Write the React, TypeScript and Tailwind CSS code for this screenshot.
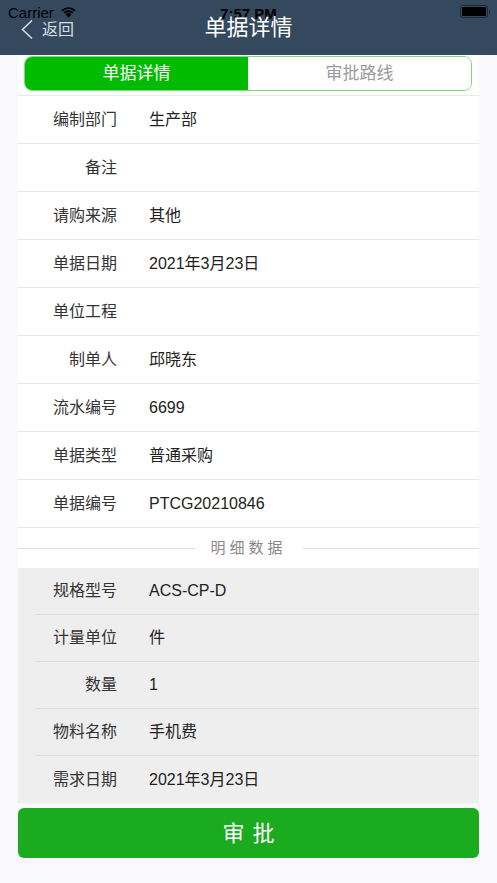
import React from "react";

const topRows: [string, string][] = [
  ["编制部门", "生产部"],
  ["备注", ""],
  ["请购来源", "其他"],
  ["单据日期", "2021年3月23日"],
  ["单位工程", ""],
  ["制单人", "邱晓东"],
  ["流水编号", "6699"],
  ["单据类型", "普通采购"],
  ["单据编号", "PTCG20210846"],
];

const detailRows: [string, string][] = [
  ["规格型号", "ACS-CP-D"],
  ["计量单位", "件"],
  ["数量", "1"],
  ["物料名称", "手机费"],
  ["需求日期", "2021年3月23日"],
];

export default function App() {
  return (
    <div
      className="w-[497px] h-[883px] bg-[#f9f8fd] flex flex-col overflow-hidden"
      style={{ fontFamily: '"Liberation Sans", "Noto Sans CJK SC", sans-serif' }}
    >
      {/* Nav bar */}
      <div className="relative h-[55px] bg-[#34495e] shrink-0">
        {/* status bar */}
        <div className="absolute left-0 top-[1px] w-full h-[22px] flex items-center px-[8px]">
          <span className="text-[15px] text-black leading-none">Carrier</span>
          <svg className="ml-[6px]" width="17" height="12" viewBox="0 0 17 12">
            <path d="M8.5 11.5 L5.6 8.4 A4.2 4.2 0 0 1 11.4 8.4 Z" fill="#000" />
            <path d="M3.6 6.3 A7 7 0 0 1 13.4 6.3 L12.1 7.6 A5.2 5.2 0 0 0 4.9 7.6 Z" fill="#000" />
            <path d="M1.4 4.1 A10.2 10.2 0 0 1 15.6 4.1 L14.3 5.4 A8.4 8.4 0 0 0 2.7 5.4 Z" fill="#000" />
          </svg>
          <span className="absolute left-1/2 -translate-x-1/2 top-[5px] text-[15px] font-semibold text-black leading-none">
            7:57 PM
          </span>
          <div className="absolute right-[7px] top-[4px] flex items-center">
            <div className="w-[28px] h-[13px] rounded-[3px] border border-[#1c2836] p-[1px]">
              <div className="w-full h-full bg-black rounded-[1px]" />
            </div>
            <div className="w-[1.5px] h-[4px] bg-[#1c2836] ml-[1px] rounded-r-sm" />
          </div>
        </div>
        {/* back */}
        <div className="absolute left-[21px] top-[20px] flex items-center">
          <svg width="12" height="19" viewBox="0 0 12 19">
            <path d="M11 0.5 L1.5 9.5 L11 18.5" stroke="#d8dde3" strokeWidth="1.5" fill="none" />
          </svg>
          <span className="ml-[9px] text-[16px] text-[#d8dde3] leading-none">返回</span>
        </div>
        <div className="absolute left-0 right-0 top-[14px] text-center text-[22px] text-white leading-[28px]">
          单据详情
        </div>
      </div>

      {/* Content */}
      <div className="mx-[18px] bg-white flex flex-col">
        <div className="px-[6px] pr-[7px] pt-[1px]">
          <div className="flex h-[35px] rounded-[8px] border border-[#7fd97f] overflow-hidden">
            <div className="flex-1 bg-[#00bb00] flex items-center justify-center text-white text-[17px]">
              单据详情
            </div>
            <div className="flex-1 bg-white flex items-center justify-center text-[#9a9a9a] text-[17px]">
              审批路线
            </div>
          </div>
        </div>
        <div className="mt-[4px] border-t border-[#e8e8e8]">
          {topRows.map(([k, v]) => (
            <div key={k} className="h-[48px] border-b border-[#e8e8e8] flex items-center">
              <div className="w-[99px] text-right text-[16px] text-[#333]">{k}</div>
              <div className="ml-[32px] text-[16px] text-[#222]">{v}</div>
            </div>
          ))}
        </div>
        <div className="h-[40px] flex items-center">
          <div className="flex-1 h-px bg-[#dedede]" />
          <div className="px-[16px] text-[15px] text-[#888] tracking-[4px]">明细数据</div>
          <div className="flex-1 h-px bg-[#dedede]" />
        </div>
        <div className="bg-[#eeeeee]">
          {detailRows.map(([k, v], i) => (
            <div
              key={k}
              className={
                "h-[47px] ml-[18px] flex items-center " +
                (i < detailRows.length - 1 ? "border-b border-[#dcdcdc]" : "")
              }
            >
              <div className="w-[81px] text-right text-[16px] text-[#333]">{k}</div>
              <div className="ml-[32px] text-[16px] text-[#222]">{v}</div>
            </div>
          ))}
        </div>
      </div>

      <div className="mx-[18px] mt-[5px] h-[50px] rounded-[6px] bg-[#1aab1e] flex items-center justify-center text-white text-[22px] tracking-[8px] pl-[8px]">
        审批
      </div>
    </div>
  );
}
